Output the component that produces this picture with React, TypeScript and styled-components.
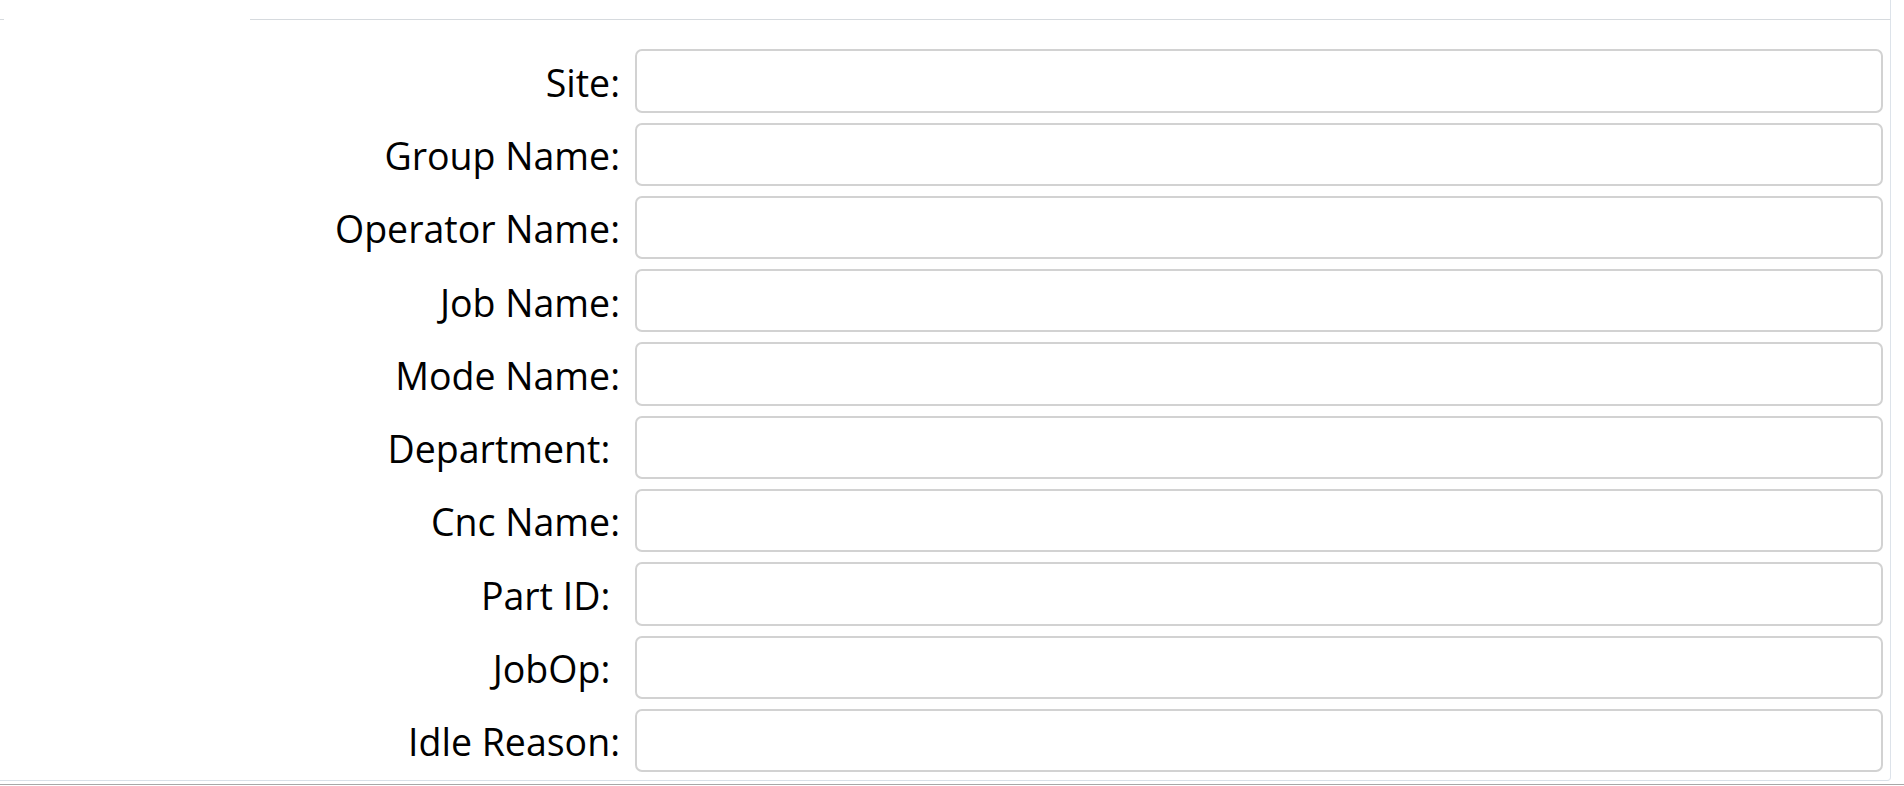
import styled, { createGlobalStyle } from "styled-components";

const GlobalStyle = createGlobalStyle`
  html, body {
    margin: 0;
    padding: 0;
    background: #ffffff;
  }

  body {
    font-family: "Open Sans", "Noto Sans", "Liberation Sans", sans-serif;
    color: #000000;
  }
`;

type Field = {
  label: string;
  name: string;
};

// some labels carry a trailing space in the source, so they sit a bit further left
const fields: Field[] = [
  { label: "Site:", name: "site" },
  { label: "Group Name:", name: "groupName" },
  { label: "Operator Name:", name: "operatorName" },
  { label: "Job Name:", name: "jobName" },
  { label: "Mode Name:", name: "modeName" },
  { label: "Department:\u00a0", name: "department" },
  { label: "Cnc Name:", name: "cncName" },
  { label: "Part ID:\u00a0", name: "partId" },
  { label: "JobOp:\u00a0", name: "jobOp" },
  { label: "Idle Reason:", name: "idleReason" },
];

function App() {
  return (
    <Page>
      <GlobalStyle />
      <TabStrip>
        <TabEdge />
        <ActiveTab />
        <TabFiller />
      </TabStrip>
      <Panel>
        <FilterForm onSubmit={(e) => e.preventDefault()}>
          {fields.map((field) => (
            <Row key={field.name}>
              <Label htmlFor={field.name}>{field.label}</Label>
              <Input id={field.name} name={field.name} type="text" />
            </Row>
          ))}
        </FilterForm>
      </Panel>
      <BottomRule />
    </Page>
  );
}

export default App;

const Page = styled.div`
  display: flex;
  flex-direction: column;
  width: 100%;
  height: 786px;
  overflow: hidden;
`;

const TabStrip = styled.div`
  display: flex;
  flex-direction: row;
  flex-shrink: 0;
  height: 20px;
  margin-right: 13px;
`;

const TabEdge = styled.div`
  width: 4px;
  border-bottom: 1px solid #d6dade;
`;

const ActiveTab = styled.div`
  width: 246px;
`;

const TabFiller = styled.div`
  flex: 1;
  border-bottom: 1px solid #d6dade;
  border-right: 1px solid #dde3ea;
  border-top-right-radius: 0;
`;

const Panel = styled.div`
  flex-shrink: 0;
  margin-right: 13px;
  padding: 29.3px 7px 8px 0;
  border-right: 1px solid #dde3ea;
  border-bottom: 1px solid #d9e0e8;
  border-bottom-right-radius: 4px;
`;

const FilterForm = styled.form`
  display: flex;
  flex-direction: column;
  gap: 10px;
  margin: 0;
`;

const Row = styled.div`
  display: grid;
  grid-template-columns: 620px 1fr;
  column-gap: 15px;
  align-items: center;
`;

const Label = styled.label`
  font-size: 37.5px;
  line-height: 1;
  text-align: right;
  white-space: pre;
  padding-top: 3px;
`;

const Input = styled.input`
  box-sizing: border-box;
  width: 100%;
  height: 63.3px;
  padding: 0 12px;
  border: 2px solid #d2d2d2;
  border-radius: 7px;
  background: #ffffff;
  font-family: inherit;
  font-size: 30px;
  outline: none;
`;

const BottomRule = styled.div`
  flex-shrink: 0;
  margin-top: 3px;
  height: 1px;
  background: #a8a8a8;
`;
